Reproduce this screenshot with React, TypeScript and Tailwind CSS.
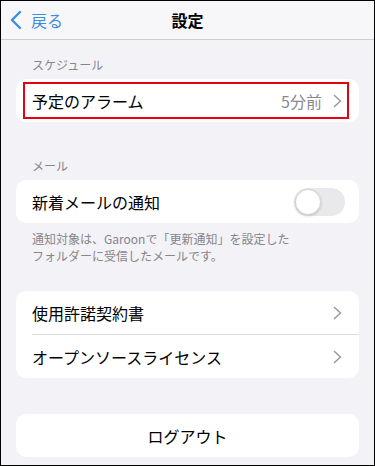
import React from "react";

const font = { fontFamily: '"Noto Sans CJK JP", "Noto Sans", sans-serif' };

function Chevron() {
  return (
    <svg width="9" height="14" viewBox="0 0 9 14" fill="none" className="shrink-0">
      <path d="M1.5 1.5 L7.5 7 L1.5 12.5" stroke="#9b9ba0" strokeWidth="1.6" strokeLinecap="round" strokeLinejoin="round" />
    </svg>
  );
}

export default function App() {
  return (
    <div style={font} className="w-[375px] h-[466px] overflow-hidden border border-black bg-[#f2f2f7] text-black">
      {/* header */}
      <div className="relative flex h-[39px] items-center border-b border-[#cfcfd3] bg-[#f7f7f9]">
        <div className="flex items-center pl-[8px] text-[#3b8ee0]">
          <svg width="14" height="20" viewBox="0 0 14 20" fill="none">
            <path d="M11 2 L3 10 L11 18" stroke="#3b8ee0" strokeWidth="2.4" strokeLinecap="round" strokeLinejoin="round" />
          </svg>
          <span className="ml-[8px] text-[16px] leading-none">戻る</span>
        </div>
        <div className="absolute left-0 right-0 text-center text-[16px] font-bold leading-none pointer-events-none">設定</div>
      </div>

      <div className="px-[15px]">
        <div className="mt-[17px] pl-[16px] text-[12px] leading-[16px] text-[#85858a]">スケジュール</div>
        <div className="mt-[6px] h-[43px] rounded-[10px] bg-white pt-[3px] pb-[3px] pl-[7px] pr-[10px]">
          <div className="flex h-full items-center border-2 border-[#e60012] pl-[7px] pr-[5px]">
            <span className="flex-1 text-[16px]">予定のアラーム</span>
            <span className="mr-[11px] text-[16px] text-[#8a8a8e]">5分前</span>
            <Chevron />
          </div>
        </div>

        <div className="mt-[36px] pl-[16px] text-[12px] leading-[16px] text-[#85858a]">メール</div>
        <div className="mt-[6px] flex h-[43px] items-center rounded-[10px] bg-white pl-[16px] pr-[14px]">
          <span className="flex-1 text-[16px]">新着メールの通知</span>
          <div className="relative h-[28px] w-[51px] rounded-full bg-[#e9e9eb]">
            <div className="absolute left-[1px] top-[1px] h-[26px] w-[26px] rounded-full border border-[#d4d4d8] bg-white shadow-[0_1px_3px_rgba(0,0,0,0.18)]" />
          </div>
        </div>
        <div className="mt-[7px] pl-[16px] text-[12px] leading-[17px] text-[#85858a]">
          <div>通知対象は、Garoonで「更新通知」を設定した</div>
          <div>フォルダーに受信したメールです。</div>
        </div>

        <div className="mt-[27px] rounded-[10px] bg-white">
          <div className="flex h-[43px] items-center pl-[16px] pr-[17px]">
            <span className="flex-1 text-[16px]">使用許諾契約書</span>
            <Chevron />
          </div>
          <div className="ml-[16px] h-px bg-[#dedee2]" />
          <div className="flex h-[43px] items-center pl-[16px] pr-[17px]">
            <span className="flex-1 text-[16px]">オープンソースライセンス</span>
            <Chevron />
          </div>
        </div>

        <div className="mt-[36px] flex h-[43px] items-center justify-center rounded-[10px] bg-white text-[16px]">
          ログアウト
        </div>
      </div>
    </div>
  );
}
